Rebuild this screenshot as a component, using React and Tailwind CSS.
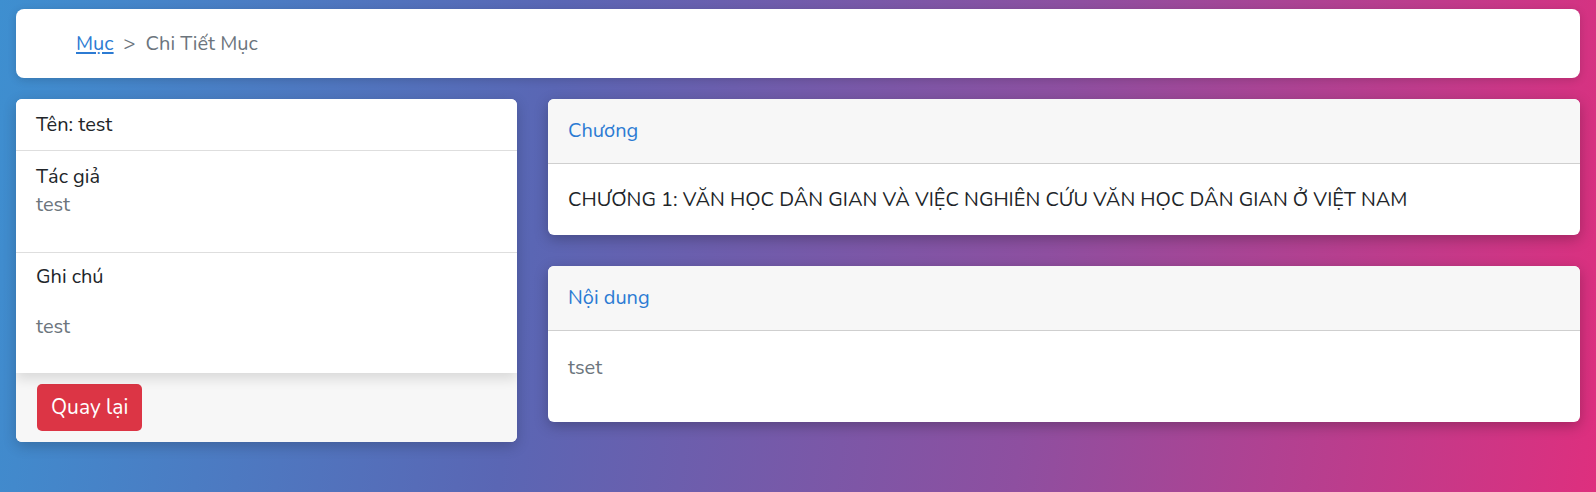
import React from 'react';

const font = { fontFamily: 'Nunito, Lato, "Open Sans", sans-serif' };

const Card = ({ title, children, bodyClass }) => (
  <div className="bg-white rounded-md shadow-[0_4px_14px_rgba(0,0,0,0.25)] overflow-hidden">
    <div className="bg-[#f7f7f7] border-b border-[#cfcfcf] h-[65px] px-5 flex items-center text-[20px] text-[#2c7bd3]">
      {title}
    </div>
    <div className={bodyClass}>{children}</div>
  </div>
);

export default function App() {
  return (
    <div
      className="min-h-screen w-full px-4 pt-[9px] pb-10 bg-[linear-gradient(98deg,#3e8fd0_0%,#5a66b4_34%,#8e4fa0_65%,#de2f7e_100%)]"
      style={font}
    >
      {/* breadcrumb */}
      <div className="h-[69px] bg-white rounded-lg flex items-center pl-[60px] text-[20px] shadow-[0_2px_8px_rgba(0,0,0,0.15)]">
        <a href="#" className="text-[#2c7bd3] underline underline-offset-2">Mục</a>
        <span className="mx-[10px] text-[#6c757d]">&gt;</span>
        <span className="text-[#6c757d]">Chi Tiết Mục</span>
      </div>

      <div className="mt-[21px] flex items-start gap-[31px]">
        {/* info card */}
        <div className="w-[501px] shrink-0 bg-white rounded-md overflow-hidden shadow-[0_4px_14px_rgba(0,0,0,0.2)]">
          <div className="relative z-10 bg-white shadow-[0_6px_12px_rgba(0,0,0,0.12)] text-[20px] text-[#212529]">
            <div className="h-[52px] px-5 flex items-center border-b border-[#dedede]">Tên: test</div>
            <div className="h-[102px] px-5 pt-[12px] border-b border-[#dedede] leading-[28px]">
              <div>Tác giả</div>
              <div className="text-[#6c757d]">test</div>
            </div>
            <div className="h-[120px] px-5 pt-[10px] leading-[28px]">
              <div>Ghi chú</div>
              <div className="mt-[22px] text-[#6c757d]">test</div>
            </div>
          </div>
          <div className="bg-[#f7f7f7] h-[69px] px-[21px] flex items-center">
            <button className="bg-[#dc3545] text-white text-[21px] rounded-[5px] h-[47px] px-[14px]">
              Quay lại
            </button>
          </div>
        </div>

        {/* right column */}
        <div className="flex-1 flex flex-col gap-[31px]">
          <Card title="Chương" bodyClass="h-[71px] px-5 flex items-center text-[20px] text-[#212529]">
            CHƯƠNG 1: VĂN HỌC DÂN GIAN VÀ VIỆC NGHIÊN CỨU VĂN HỌC DÂN GIAN Ở VIỆT NAM
          </Card>
          <Card title="Nội dung" bodyClass="h-[91px] px-5 pt-[22px] text-[20px] text-[#6c757d]">
            tset
          </Card>
        </div>
      </div>
    </div>
  );
}
